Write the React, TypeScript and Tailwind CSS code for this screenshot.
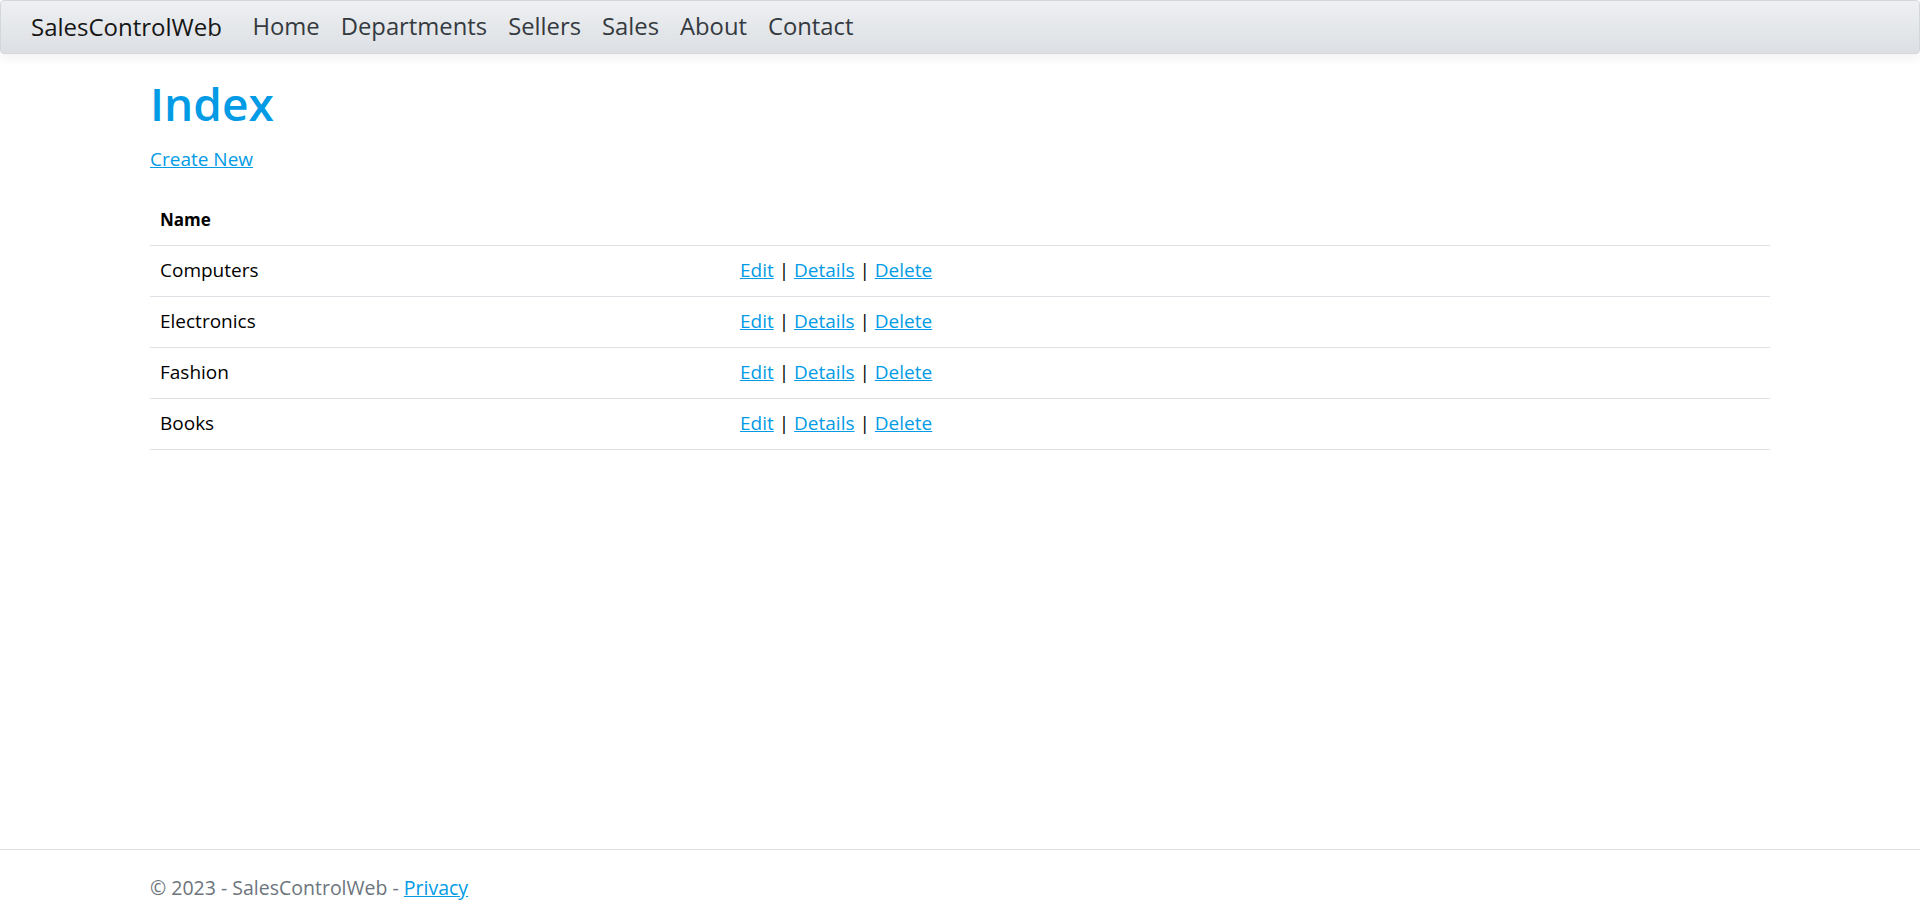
import React from 'react';

const departments = ['Computers', 'Electronics', 'Fashion', 'Books'];

const navLinks = ['Home', 'Departments', 'Sellers', 'Sales', 'About', 'Contact'];

const Navbar = () => {
  return (
    <nav className="h-[54px] flex items-center rounded-[4px] border border-[#d3d6db] bg-gradient-to-b from-[#eef0f3] to-[#dcdfe3] shadow-[0_4px_12px_rgba(0,0,0,0.06)] pl-[30px]">
      <a href="#" className="text-[24px] text-[#161616] mr-[20px]">SalesControlWeb</a>
      <ul className="flex items-center">
        {navLinks.map((link) => (
          <li key={link}>
            <a href="#" className="block px-[10.5px] text-[23.8px] text-[#343a40]">{link}</a>
          </li>
        ))}
      </ul>
    </nav>
  );
};

const DepartmentsTable = () => {
  return (
    <table className="w-full border-collapse">
      <thead>
        <tr className="border-b border-[#dee2e6]">
          <th className="w-[580px] text-left font-bold text-[17px] leading-[27px] px-[10px] pt-[12px] pb-[12px] text-black">Name</th>
          <th className="px-[10px]"></th>
        </tr>
      </thead>
      <tbody>
        {departments.map((name) => (
          <tr key={name} className="border-b border-[#dee2e6]">
            <td className="px-[10px] py-[11.5px] leading-[27px] text-black">{name}</td>
            <td className="px-[10px] py-[11.5px] leading-[27px] text-black">
              <a href="#" className="text-[#039be5] underline">Edit</a> |{' '}
              <a href="#" className="text-[#039be5] underline">Details</a> |{' '}
              <a href="#" className="text-[#039be5] underline">Delete</a>
            </td>
          </tr>
        ))}
      </tbody>
    </table>
  );
};

export default function App() {
  return (
    <div className="h-screen flex flex-col bg-white text-[19px] font-['Open_Sans',sans-serif]">
      <Navbar />
      <main className="flex-1">
        <div className="mx-auto max-w-[1650px] px-[15px]">
          <h1 className="mt-[21px] text-[46px] leading-[1.25] font-semibold text-[#039be5]">Index</h1>
          <p className="mt-[13px] leading-[27px]">
            <a href="#" className="text-[#039be5] underline">Create New</a>
          </p>
          <div className="mt-[21px]">
            <DepartmentsTable />
          </div>
        </div>
      </main>
      <footer className="h-[75px] border-t border-[#dee2e6]">
        <div className="mx-auto max-w-[1650px] px-[15px] pt-6 leading-[27px] text-[19.5px] text-[#6c757d]">
          © 2023 - SalesControlWeb - <a href="#" className="text-[#039be5] underline">Privacy</a>
        </div>
      </footer>
    </div>
  );
}
